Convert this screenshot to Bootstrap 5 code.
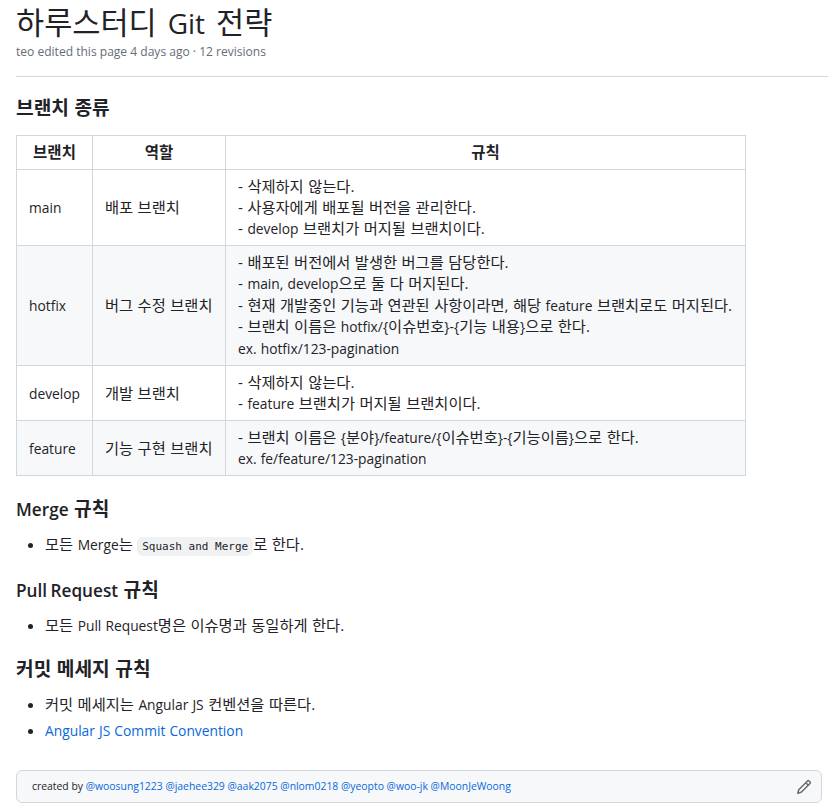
<!DOCTYPE html>
<html lang="ko">
<head>
<meta charset="utf-8">
<title>하루스터디 Git 전략</title>
<link href="https://cdn.jsdelivr.net/npm/bootstrap@5.3.0/dist/css/bootstrap.min.css" rel="stylesheet">
<style>
body{font-family:"Open Sans","Noto Sans CJK KR",sans-serif;color:#1f2328;font-size:15.3px;word-spacing:.5px;line-height:21px;background:#fff;overflow:hidden}
.wiki-page{padding:0 6px 0 16px;height:811px;display:flex;flex-direction:column}
.wiki-title{font-family:"Open Sans","Noto Sans CJK KR",sans-serif;font-size:30.6px;font-weight:400;line-height:42px;margin:0;padding-top:1px;word-spacing:3px}
.wiki-title .lt{font-size:28px}
.lt{font-size:13.8px;line-height:1}
.wiki-meta{color:#656d76;font-size:12.05px;line-height:18px;margin:0 0 15px;word-spacing:0}
.wiki-rule{border:0;border-top:1px solid #d0d7de;opacity:1;margin:0 -6px 0 0}
.sec-h{font-size:19.2px;font-weight:700;line-height:26px;margin:0;color:#1f2328}
.sec-h .lt{font-size:17.2px;font-weight:600;word-spacing:-1px}
.sec-first{margin-top:18px;margin-bottom:14px}
.sec-mid{margin-top:15px;margin-bottom:12px}
.sec-after{margin-top:20px}
.wiki-table{width:729px;table-layout:fixed;border-collapse:collapse;margin:0;color:#1f2328}
.wiki-table th,.wiki-table td{border:1px solid #d0d7de;padding:6px 12px;vertical-align:middle;background:transparent;box-shadow:none;color:#1f2328}
.wiki-table th{text-align:center;font-weight:700;padding:6px 12px;line-height:21px;font-size:15.5px}
.wiki-table tbody tr:nth-child(even) td{background:#f6f8fa}
.col-a{width:76px}.col-b{width:133px}.col-c{width:520px}
.row-wide{line-height:21.4px}
.wiki-list{margin:0;padding-left:29px}
.wiki-list li{margin-bottom:5px}
.wiki-code{font-family:"DejaVu Sans Mono","Liberation Mono",monospace;font-size:11px;background:#eff1f3;color:#1f2328;border-radius:6px;padding:3px 5px;word-spacing:0}
.wiki-link{color:#0969da;text-decoration:none}
.wiki-foot{margin-top:auto;margin-bottom:8px;border:1px solid #d0d7de;border-radius:6px;background:#f6f8fa;height:33px;padding:0 9px 0 15px;font-size:10.4px;word-spacing:0;display:flex;align-items:center;justify-content:space-between}
.wiki-foot svg{fill:#656d76;display:block}
</style>
</head>
<body>
<main class="wiki-page">
  <h1 class="wiki-title">하루스터디 <span class="lt">Git</span> 전략</h1>
  <p class="wiki-meta">teo edited this page 4 days ago · 12 revisions</p>
  <hr class="wiki-rule">
  <h2 class="sec-h sec-first">브랜치 종류</h2>
  <table class="table wiki-table">
    <colgroup><col class="col-a"><col class="col-b"><col class="col-c"></colgroup>
    <thead><tr><th>브랜치</th><th>역할</th><th>규칙</th></tr></thead>
    <tbody>
      <tr><td><span class="lt">main</span></td><td>배포 브랜치</td><td>- 삭제하지 않는다.<br>- 사용자에게 배포될 버전을 관리한다.<br>- <span class="lt">develop</span> 브랜치가 머지될 브랜치이다.</td></tr>
      <tr><td><span class="lt">hotfix</span></td><td>버그 수정 브랜치</td><td class="row-wide">- 배포된 버전에서 발생한 버그를 담당한다.<br>- <span class="lt">main, develop</span>으로 둘 다 머지된다.<br>- 현재 개발중인 기능과 연관된 사항이라면, 해당 <span class="lt">feature</span> 브랜치로도 머지된다.<br>- 브랜치 이름은 <span class="lt">hotfix/{</span>이슈번호<span class="lt">}-{</span>기능 내용<span class="lt">}</span>으로 한다.<br><span class="lt">ex. hotfix/123-pagination</span></td></tr>
      <tr><td><span class="lt">develop</span></td><td>개발 브랜치</td><td>- 삭제하지 않는다.<br>- <span class="lt">feature</span> 브랜치가 머지될 브랜치이다.</td></tr>
      <tr><td><span class="lt">feature</span></td><td>기능 구현 브랜치</td><td>- 브랜치 이름은 <span class="lt">{</span>분야<span class="lt">}/feature/{</span>이슈번호<span class="lt">}-{</span>기능이름<span class="lt">}</span>으로 한다.<br><span class="lt">ex. fe/feature/123-pagination</span></td></tr>
    </tbody>
  </table>
  <h3 class="sec-h sec-mid sec-after"><span class="lt">Merge</span> 규칙</h3>
  <ul class="wiki-list"><li>모든 <span class="lt">Merge</span>는 <code class="wiki-code">Squash and Merge</code>로 한다.</li></ul>
  <h3 class="sec-h sec-mid"><span class="lt">Pull Request</span> 규칙</h3>
  <ul class="wiki-list"><li>모든 <span class="lt">Pull Request</span>명은 이슈명과 동일하게 한다.</li></ul>
  <h3 class="sec-h sec-mid">커밋 메세지 규칙</h3>
  <ul class="wiki-list">
    <li>커밋 메세지는 <span class="lt">Angular JS</span> 컨벤션을 따른다.</li>
    <li><a class="wiki-link lt" href="#">Angular JS Commit Convention</a></li>
  </ul>
  <footer class="wiki-foot">
    <span>created by <a class="wiki-link" href="#">@woosung1223</a> <a class="wiki-link" href="#">@jaehee329</a> <a class="wiki-link" href="#">@aak2075</a> <a class="wiki-link" href="#">@nlom0218</a> <a class="wiki-link" href="#">@yeopto</a> <a class="wiki-link" href="#">@woo-jk</a> <a class="wiki-link" href="#">@MoonJeWoong</a></span>
    <svg width="16" height="16" viewBox="0 0 16 16" aria-hidden="true"><path d="M11.013 1.427a1.75 1.75 0 0 1 2.474 0l1.086 1.086a1.75 1.75 0 0 1 0 2.474l-8.61 8.61c-.21.21-.47.364-.756.445l-3.251.93a.75.75 0 0 1-.927-.928l.929-3.25c.081-.286.235-.547.445-.758l8.61-8.61Zm.176 4.823L9.75 4.81l-6.286 6.287a.253.253 0 0 0-.064.108l-.558 1.953 1.953-.558a.253.253 0 0 0 .108-.064Zm1.238-3.763a.25.25 0 0 0-.354 0L10.811 3.75l1.439 1.44 1.263-1.263a.25.25 0 0 0 0-.354Z"/></svg>
  </footer>
</main>
</body>
</html>
